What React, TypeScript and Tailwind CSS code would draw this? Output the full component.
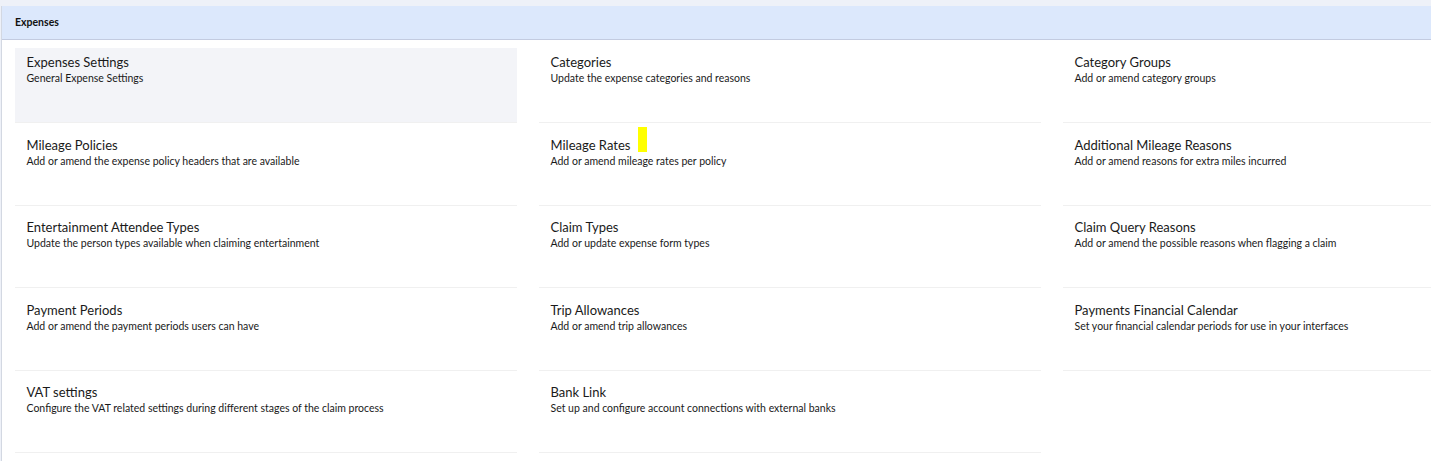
const items = [
  { title: "Expenses Settings", desc: "General Expense Settings" },
  { title: "Categories", desc: "Update the expense categories and reasons" },
  { title: "Category Groups", desc: "Add or amend category groups" },
  { title: "Mileage Policies", desc: "Add or amend the expense policy headers that are available" },
  { title: "Mileage Rates", desc: "Add or amend mileage rates per policy" },
  { title: "Additional Mileage Reasons", desc: "Add or amend reasons for extra miles incurred" },
  { title: "Entertainment Attendee Types", desc: "Update the person types available when claiming entertainment" },
  { title: "Claim Types", desc: "Add or update expense form types" },
  { title: "Claim Query Reasons", desc: "Add or amend the possible reasons when flagging a claim" },
  { title: "Payment Periods", desc: "Add or amend the payment periods users can have" },
  { title: "Trip Allowances", desc: "Add or amend trip allowances" },
  { title: "Payments Financial Calendar", desc: "Set your financial calendar periods for use in your interfaces" },
  { title: "VAT settings", desc: "Configure the VAT related settings during different stages of the claim process" },
  { title: "Bank Link", desc: "Set up and configure account connections with external banks" },
];

export default function App() {
  return (
    <div
      className="w-[1431px] h-[461px] overflow-hidden bg-[#eef1f8] pt-[6px] pl-[1px] text-[#1e1e1e]"
      style={{ fontFamily: "Lato, 'Open Sans', sans-serif" }}
    >
      <div className="h-full bg-white border-l border-[#d3d8e2] relative">
        <div className="h-[34px] bg-[#dce8fc] border-b border-[#c3cbe0] flex items-center pl-[13px]">
          <span className="text-[10.5px] font-bold text-[#111]">Expenses</span>
        </div>
        <div className="pt-[8px] pl-[13px]">
          <div className="grid grid-cols-[repeat(3,502px)] gap-x-[22px] gap-y-[7.5px]">
            {items.map((it, i) => (
              <div
                key={it.title}
                className={`h-[75px] border-b border-[#f0f0f0] pl-[11.5px] pr-[12px] pt-[6px] ${
                  i === 0 ? "bg-[#f3f4f8]" : ""
                }`}
              >
                <div className="text-[13px] leading-[17px] text-[#1a1a1a]">{it.title}</div>
                <div className="text-[10.5px] leading-[14px] text-[#1a1a1a]">{it.desc}</div>
              </div>
            ))}
          </div>
        </div>
        <div className="absolute left-[636px] top-[121px] w-[9px] h-[25px] bg-[#ffff00]" />
      </div>
    </div>
  );
}
